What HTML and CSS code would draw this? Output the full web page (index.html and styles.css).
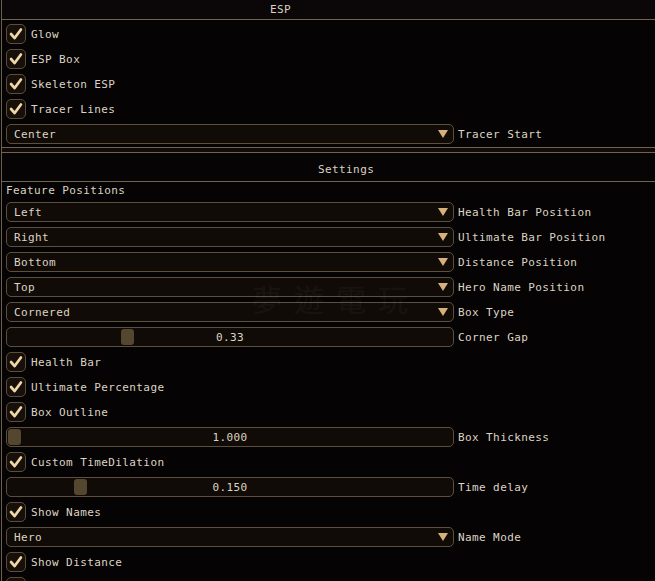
FILE: index.html
```html
<!DOCTYPE html>
<html>
<head>
<meta charset="utf-8">
<link rel="stylesheet" href="styles.css">
</head>
<body>
<div class="win">
  <div class="panel p1">
    <div class="hdr hdr-esp">ESP</div>
    <div class="body">
      <div class="row"><span class="cb"><svg viewBox="0 0 20 20"><polyline points="4.5,10 8.5,14.5 15.5,5"/></svg></span><span class="lbl">Glow</span></div>
      <div class="row"><span class="cb"><svg viewBox="0 0 20 20"><polyline points="4.5,10 8.5,14.5 15.5,5"/></svg></span><span class="lbl">ESP Box</span></div>
      <div class="row"><span class="cb"><svg viewBox="0 0 20 20"><polyline points="4.5,10 8.5,14.5 15.5,5"/></svg></span><span class="lbl">Skeleton ESP</span></div>
      <div class="row"><span class="cb"><svg viewBox="0 0 20 20"><polyline points="4.5,10 8.5,14.5 15.5,5"/></svg></span><span class="lbl">Tracer Lines</span></div>
      <div class="row"><span class="combo"><span class="val">Center</span><span class="arrow"></span></span><span class="rl">Tracer Start</span></div>
    </div>
  </div>
  <div class="sep"></div>
  <div class="panel p2">
    <div class="hdr hdr-set">Settings</div>
    <div class="body">
      <div class="text">Feature Positions</div>
      <div class="row"><span class="combo"><span class="val">Left</span><span class="arrow"></span></span><span class="rl">Health Bar Position</span></div>
      <div class="row"><span class="combo"><span class="val">Right</span><span class="arrow"></span></span><span class="rl">Ultimate Bar Position</span></div>
      <div class="row"><span class="combo"><span class="val">Bottom</span><span class="arrow"></span></span><span class="rl">Distance Position</span></div>
      <div class="row"><span class="combo"><span class="val">Top</span><span class="arrow"></span></span><span class="rl">Hero Name Position</span></div>
      <div class="row"><span class="combo"><span class="val">Cornered</span><span class="arrow"></span></span><span class="rl">Box Type</span></div>
      <div class="row"><span class="slider"><span class="grab" style="left:114px"></span><span class="sval">0.33</span></span><span class="rl">Corner Gap</span></div>
      <div class="row"><span class="cb"><svg viewBox="0 0 20 20"><polyline points="4.5,10 8.5,14.5 15.5,5"/></svg></span><span class="lbl">Health Bar</span></div>
      <div class="row"><span class="cb"><svg viewBox="0 0 20 20"><polyline points="4.5,10 8.5,14.5 15.5,5"/></svg></span><span class="lbl">Ultimate Percentage</span></div>
      <div class="row"><span class="cb"><svg viewBox="0 0 20 20"><polyline points="4.5,10 8.5,14.5 15.5,5"/></svg></span><span class="lbl">Box Outline</span></div>
      <div class="row"><span class="slider"><span class="grab" style="left:1px"></span><span class="sval">1.000</span></span><span class="rl">Box Thickness</span></div>
      <div class="row"><span class="cb"><svg viewBox="0 0 20 20"><polyline points="4.5,10 8.5,14.5 15.5,5"/></svg></span><span class="lbl">Custom TimeDilation</span></div>
      <div class="row"><span class="slider"><span class="grab" style="left:67px"></span><span class="sval">0.150</span></span><span class="rl">Time delay</span></div>
      <div class="row"><span class="cb"><svg viewBox="0 0 20 20"><polyline points="4.5,10 8.5,14.5 15.5,5"/></svg></span><span class="lbl">Show Names</span></div>
      <div class="row"><span class="combo"><span class="val">Hero</span><span class="arrow"></span></span><span class="rl">Name Mode</span></div>
      <div class="row"><span class="cb"><svg viewBox="0 0 20 20"><polyline points="4.5,10 8.5,14.5 15.5,5"/></svg></span><span class="lbl">Show Distance</span></div>
      <div class="row"><span class="cb"><svg viewBox="0 0 20 20"><polyline points="4.5,10 8.5,14.5 15.5,5"/></svg></span></div>
    </div>
  </div>
  <div class="wm">夢遊電玩</div>
</div>
</body>
</html>
```

FILE: styles.css
```css
html, body {
  margin: 0;
  padding: 0;
  background: #050304;
  width: 655px;
  height: 581px;
  overflow: hidden;
}
.win {
  position: relative;
  font-family: "DejaVu Sans Mono", "Liberation Mono", "Noto Sans CJK SC", monospace;
  font-size: 11px;
  letter-spacing: 0.4px;
  color: #ddd4c3;
  padding-left: 1px;
}
.panel {
  border-left: 1px solid #6b5f4e;
}
.hdr {
  border-bottom: 1px solid #6f6352;
  background: #0b0708;
  display: flex;
  align-items: center;
  color: #dcd2c1;
}
.hdr-esp {
  height: 19px;
  padding-left: 268px;
}
.hdr-set {
  height: 23px;
  padding-top: 5px;
  padding-left: 316px;
  background: #070405;
}
.p1 .body {
  padding: 4px 0 3px 4px;
  border-bottom: 1px solid #6f6352;
}
.sep {
  height: 4px;
  background: #120a07;
  border-left: 1px solid #6b5f4e;
}
.p2 {
  border-top: 1px solid #6f6352;
}
.body {
  display: flex;
  flex-direction: column;
  gap: 5px;
  padding: 4px 0 0 4px;
}
.p2 .body {
  padding-left: 4px;
}
.text {
  height: 11px;
  line-height: 11px;
  margin-top: -1px;
  margin-bottom: 1px;
}
.row {
  display: flex;
  align-items: center;
  height: 20px;
  flex-shrink: 0;
}
.cb {
  width: 18px;
  height: 18px;
  border: 1px solid #5c4d3a;
  border-radius: 5px;
  background: #17100a;
  display: flex;
}
.cb svg {
  width: 18px;
  height: 18px;
  fill: none;
  stroke: #f0d8a6;
  stroke-width: 3;
  stroke-linecap: round;
  stroke-linejoin: round;
}
.lbl {
  margin-left: 5px;
}
.combo, .slider {
  width: 446px;
  height: 18px;
  border: 1px solid #5d4f3d;
  border-radius: 5px;
  background: #110b07;
  display: flex;
  align-items: center;
  position: relative;
  box-sizing: content-box;
}
.combo .val {
  margin-left: 7px;
  flex: 1;
}
.arrow {
  width: 0;
  height: 0;
  border-left: 5px solid transparent;
  border-right: 5px solid transparent;
  border-top: 8px solid #d6b27a;
  margin-right: 5px;
}
.rl {
  margin-left: 4px;
}
.slider {
  justify-content: center;
}
.grab {
  position: absolute;
  top: 1px;
  width: 13px;
  height: 16px;
  border-radius: 3px;
  background: #55472f;
}
.sval {
  position: relative;
}
.wm {
  position: absolute;
  left: 252px;
  top: 276px;
  font-family: "Noto Sans CJK TC", "Noto Sans CJK SC", sans-serif;
  font-size: 30px;
  letter-spacing: 12px;
  color: #ffffff;
  opacity: 0.03;
  pointer-events: none;
}
```
